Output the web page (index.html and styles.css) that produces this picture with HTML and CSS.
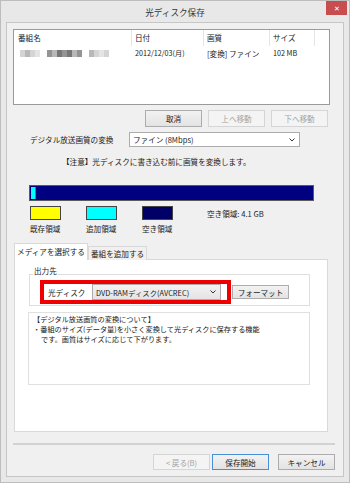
FILE: index.html
```html
<!DOCTYPE html>
<html lang="ja">
<head>
  <meta charset="UTF-8" />
  <title>光ディスク保存</title>
  <link rel="stylesheet" href="styles.css">
</head>
<body>
  <div class="window">
    <div class="titlebar">
      <span></span>
      <span class="title">光ディスク保存</span>
      <span class="close">✕</span>
    </div>

    <div class="client">
      <!-- 番組リスト -->
      <div class="listview">
        <div class="lv-head">
          <div class="c1">番組名</div>
          <div class="c2">日付</div>
          <div class="c3">画質</div>
          <div class="c4">サイズ</div>
          <div class="cf"></div>
        </div>
        <div class="lv-row">
          <div class="c1">
            <span class="mosaic">
              <i class="m1"></i><i class="m2"></i><i class="m1"></i><i class="m3"></i><i class="sp"></i>
              <i class="m4"></i><i class="m2"></i><i class="m5"></i><i class="m4"></i><i class="m5"></i><i class="m2"></i><i class="m4"></i><i class="sp"></i>
              <i class="m2"></i><i class="m1"></i><i class="m3"></i><i class="m1"></i>
            </span>
          </div>
          <div class="c2">2012/12/03(月)</div>
          <div class="c3">[変換] ファイン</div>
          <div class="c4">102 MB</div>
        </div>
      </div>

      <div class="btn-row top">
        <button class="btn">取消</button>
        <button class="btn" disabled>上へ移動</button>
        <button class="btn" disabled>下へ移動</button>
      </div>

      <div class="convert">
        <span class="convert-label">デジタル放送画質の変換</span>
        <div class="select wide">
          <span>ファイン (8Mbps)</span>
          <svg width="6" height="4" viewBox="0 0 6 4"><path d="M0.5 0.5 L3 3 L5.5 0.5" fill="none" stroke="#333" stroke-width="1"/></svg>
        </div>
      </div>

      <p class="note">【注意】光ディスクに書き込む前に画質を変換します。</p>

      <!-- 容量バー -->
      <div class="bar"><div class="bar-add"></div></div>

      <div class="legend">
        <div class="legend-item"><div class="swatch yellow"></div><span>既存領域</span></div>
        <div class="legend-item"><div class="swatch cyan"></div><span>追加領域</span></div>
        <div class="legend-item"><div class="swatch navy"></div><span>空き領域</span></div>
        <div class="free">空き領域: 4.1 GB</div>
      </div>

      <div class="tabs">
        <div class="tab active">メディアを選択する</div>
        <div class="tab">番組を追加する</div>
      </div>
      <div class="panel">
        <div class="group">
          <div class="group-title">出力先</div>
          <div class="group-body">
            <div class="target">
              <span class="target-label">光ディスク</span>
              <div class="select disc">
                <span>DVD-RAMディスク(AVCREC)</span>
                <svg width="6" height="4" viewBox="0 0 6 4"><path d="M0.5 0.5 L3 3 L5.5 0.5" fill="none" stroke="#333" stroke-width="1"/></svg>
              </div>
            </div>
            <button class="btn format">フォーマット</button>
          </div>
        </div>
        <div class="memo">
          <div>【デジタル放送画質の変換について】</div>
          <div>・番組のサイズ(データ量)を小さく変換して光ディスクに保存する機能</div>
          <div class="indent">です。画質はサイズに応じて下がります。</div>
        </div>
      </div>

      <div class="sep"></div>

      <div class="btn-row bottom">
        <button class="btn" disabled>&lt; 戻る(B)</button>
        <button class="btn default">保存開始</button>
        <button class="btn cancel">キャンセル</button>
      </div>
    </div>
  </div>
</body>
</html>
```

FILE: styles.css
```css
* { box-sizing: border-box; }
body {
  margin: 0;
  font-family: "Noto Sans CJK JP", "Noto Sans", sans-serif;
  font-size: 7.6px;
  color: #1a1a1a;
  background: #e6e6e6;
}

.window {
  width: 350px;
  height: 483px;
  border: 1px solid #bdbdbd;
  background: #e8e8e8;
}

/* タイトルバー */
.titlebar {
  height: 21px;
  display: grid;
  grid-template-columns: 1fr auto 1fr;
  align-items: start;
}
.title {
  font-size: 8.6px;
  line-height: 22px;
  color: #333;
}
.close {
  justify-self: end;
  margin-right: 2px;
  width: 21px;
  height: 14px;
  background: #c74d4f;
  color: #fff;
  font-size: 7px;
  line-height: 14px;
  text-align: center;
}

.client {
  height: 455px;
  margin: 0 5px 5px 5px;
  border: 1px solid #c6c6c6;
  background: #f0f0f0;
}

/* リストビュー */
.listview {
  margin: 6px 0 0 6px;
  width: 317px;
  height: 76px;
  border: 1px solid #9a9a9a;
  background: #fff;
}
.lv-head, .lv-row { display: flex; }
.lv-head { height: 16px; line-height: 16px; }
.lv-head > div { border-right: 1px solid #e5e5e5; }
.lv-row { height: 13px; line-height: 13px; margin-top: 1px; }
.c1 { width: 118px; padding-left: 4px; }
.c2 { width: 72px; padding-left: 3px; }
.c3 { width: 66px; padding-left: 3px; }
.c4 { width: 45px; padding-left: 3px; }
.cf { flex: 1; border-right: none !important; }
.lv-row .c2, .lv-row .c4 { font-size: 7.2px; }

.mosaic { display: flex; align-items: center; height: 13px; padding-left: 2px; }
.mosaic i { display: block; width: 5px; height: 7px; }
.mosaic .sp { width: 7px; background: none; }
.m1 { background: #d4d4d4; }
.m2 { background: #b8b8b8; }
.m3 { background: #e4e4e4; }
.m4 { background: #949494; }
.m5 { background: #777; }

/* ボタン */
.btn-row { display: flex; justify-content: flex-end; }
.btn-row.top { margin-top: 5px; padding-right: 15px; gap: 6px; }
.btn {
  width: 57px;
  height: 17px;
  padding: 0;
  font-family: inherit;
  font-size: 7.6px;
  color: #1a1a1a;
  border: 1px solid #acacac;
  background: linear-gradient(#f2f2f2, #e3e3e3);
  white-space: nowrap;
}
.btn:disabled {
  color: #a3a3a3;
  border-color: #d5d5d5;
  background: #f4f4f4;
}
.btn-row.bottom { margin-top: 9px; padding-right: 8px; }
.btn-row.bottom .btn { height: 16px; }
.btn.default { margin-left: 2px; border-color: #4a8fd6; }
.btn.cancel { margin-left: 9px; }

/* 画質変換 */
.convert { display: flex; align-items: center; margin-top: 5px; height: 15px; }
.convert-label { width: 122px; padding-left: 23px; white-space: nowrap; }
.select {
  display: flex;
  align-items: center;
  justify-content: space-between;
  height: 15px;
  border: 1px solid #acacac;
  background: #fff;
  padding: 0 4px 0 3px;
  white-space: nowrap;
}
.select.wide { width: 171px; }

.note { margin: 9px 0 0 55px; height: 12px; line-height: 12px; }

/* 容量バー */
.bar {
  margin: 17px 0 0 22px;
  width: 285px;
  height: 16px;
  border: 1px solid #5a5a5a;
  background: #000080;
  padding: 1px 0 1px 1px;
}
.bar-add { width: 5px; height: 100%; background: #00ffff; border-right: 1px solid #3a8080; }

.legend { display: flex; margin: 5px 0 0 23px; height: 30px; }
.legend-item { width: 56px; display: flex; flex-direction: column; }
.legend-item span { margin-top: 3px; line-height: 12px; }
.swatch { width: 31px; height: 14px; border: 1px solid #444; }
.yellow { background: #ffff00; }
.cyan { background: #00ffff; }
.navy { background: #000066; }
.free { margin: 2px 0 0 9px; line-height: 12px; }

/* タブ */
.tabs { display: flex; align-items: flex-end; margin: 7px 0 -1px 7px; height: 17px; }
.tab {
  height: 14px;
  line-height: 13px;
  padding: 0 2px;
  border: 1px solid #d9d9d9;
  border-bottom: none;
  background: #f0f0f0;
  white-space: nowrap;
  text-align: center;
}
.tab.active {
  width: 74px;
  height: 17px;
  line-height: 16px;
  background: #fff;
  position: relative;
  z-index: 1;
}
.tab:not(.active) { width: 59px; }

.panel {
  margin-left: 7px;
  width: 314px;
  height: 173px;
  border: 1px solid #d9d9d9;
  background: #fff;
  padding-top: 14px;
}

.group {
  margin-left: 14px;
  width: 281px;
  height: 32px;
  border: 1px solid #dedede;
}
.group-title {
  width: fit-content;
  margin: -9px 0 0 3px;
  padding: 0 1px;
  line-height: 10px;
  height: 10px;
  background: #fff;
}
.group-body { display: flex; align-items: center; margin: 4px 0 0 10px; }

/* 出力先（赤枠） */
.target {
  display: flex;
  align-items: center;
  width: 191px;
  height: 24px;
  border: 4px solid #ee0000;
  padding-left: 4px;
}
.target-label { width: 44px; white-space: nowrap; }
.select.disc {
  width: 129px;
  height: 16px;
  background: linear-gradient(#f2f2f2, #e4e4e4);
  border-color: #adadad;
  font-size: 7.4px;
}
.btn.format { margin-left: 1px; height: 14px; }

.memo {
  margin: 6px 0 0 13px;
  width: 282px;
  height: 73px;
  border: 1px solid #e0e0e0;
  padding: 1px 0 0 4px;
  font-size: 7.2px;
  line-height: 10px;
}
.memo .indent { padding-left: 8px; }

.sep {
  margin: 11px 0 0 6px;
  width: 322px;
  height: 2px;
  background: #d2d2d2;
}
```
